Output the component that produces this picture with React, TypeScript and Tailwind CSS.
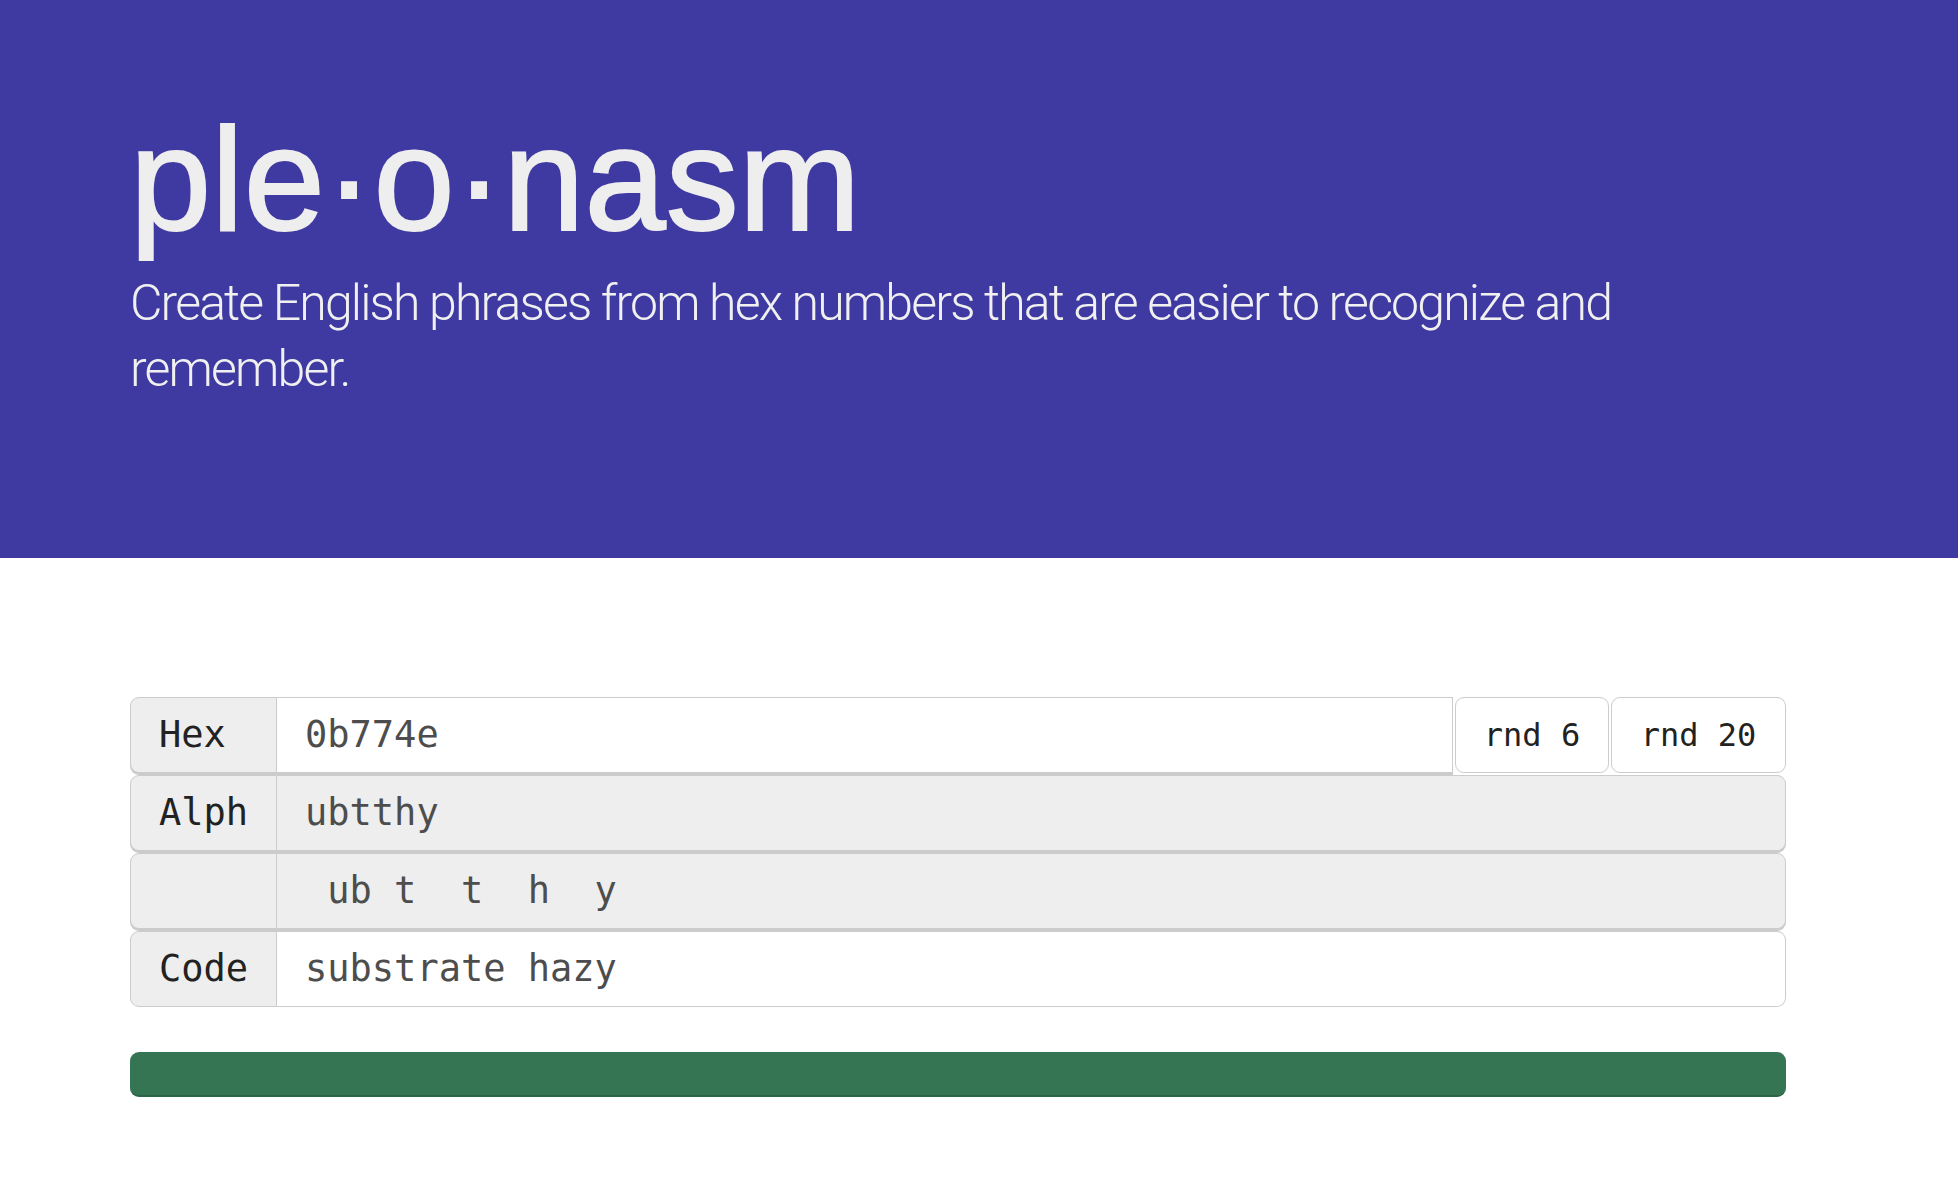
import React from "react";

const mono = "font-['DejaVu_Sans_Mono',monospace]";

function Row({
  label,
  value,
  bg,
  shadow,
  buttons,
}: {
  label: string;
  value: string;
  bg: string;
  shadow: boolean;
  buttons?: boolean;
}) {
  return (
    <div className={`flex h-[76px] ${mono} text-[37px]`}>
      <div
        className={`w-[147px] shrink-0 bg-[#eeeeee] border border-[#cccccc] rounded-l-[9px] px-[28px] flex items-center text-[#222222] ${
          shadow ? "shadow-[0_2px_0_#cbcbcb]" : ""
        }`}
      >
        {label}
      </div>
      <div
        className={`flex-1 border border-l-0 border-[#cccccc] px-[28px] flex items-center text-[#4d4d4d] whitespace-pre ${bg} ${
          buttons ? "" : "rounded-r-[9px]"
        } ${shadow ? "shadow-[0_2px_0_#cbcbcb]" : ""}`}
      >
        {value}
      </div>
      {buttons && (
        <>
          <div className="ml-[2px] w-[154px] shrink-0 bg-white border border-[#cccccc] rounded-[9px] flex items-center justify-center text-[#222222] text-[32px]">
            rnd 6
          </div>
          <div className="ml-[2px] w-[175px] shrink-0 bg-white border border-[#cccccc] rounded-[9px] flex items-center justify-center text-[#222222] text-[32px]">
            rnd 20
          </div>
        </>
      )}
    </div>
  );
}

export default function App() {
  return (
    <div className="w-[1958px] min-h-[1192px] bg-white">
      <header className="bg-[#3f3aa2] h-[558px] pl-[130px] pt-[107px]">
        <h1 className="font-['Liberation_Sans',Arial,sans-serif] text-[146px] leading-[146px] text-[#eeeeee] [-webkit-text-stroke:2px_#eeeeee]">
          ple·o·nasm
        </h1>
        <p className="mt-[17px] w-[1656px] font-['Roboto',sans-serif] font-light text-[50px] leading-[66px] text-[#f0f0f0] tracking-[-1.85px]">
          Create English phrases from hex numbers that are easier to recognize and remember.
        </p>
      </header>
      <main className="pl-[130px] pt-[139px]">
        <div className="w-[1656px] flex flex-col gap-[2px]">
          <Row label="Hex" value="0b774e" bg="bg-white" shadow buttons />
          <Row label="Alph" value="ubtthy" bg="bg-[#eeeeee]" shadow />
          <Row label="" value=" ub t  t  h  y" bg="bg-[#eeeeee]" shadow />
          <Row label="Code" value="substrate hazy" bg="bg-white" shadow={false} />
        </div>
        <div className="w-[1656px] mt-[45px] h-[45px] rounded-[9px] bg-[#367554] border-b-2 border-[#2d6547]" />
      </main>
    </div>
  );
}
